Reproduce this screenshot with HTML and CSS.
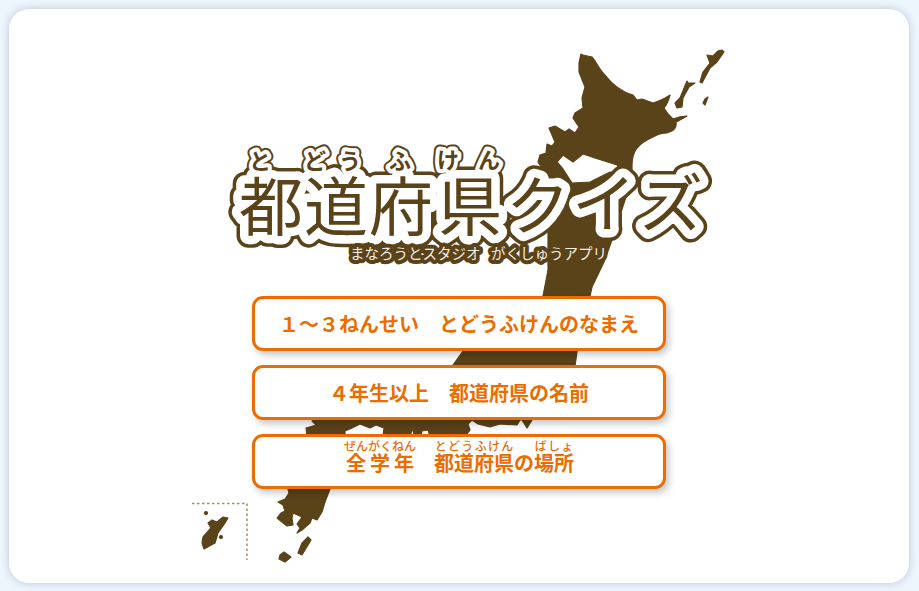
FILE: index.html
```html
<!DOCTYPE html>
<html lang="ja">
<head>
  <meta charset="UTF-8">
  <meta name="viewport" content="width=device-width, initial-scale=1.0">
  <title>都道府県クイズ</title>
  <link rel="stylesheet" href="styles.css">
</head>
<body>
  <div class="card">
    <!-- map art sits behind everything, coords are page px -->
    <svg class="map" viewBox="9 9 900 574" aria-hidden="true">
      <path class="land" fill-rule="evenodd" d="M581 54L583 55L592 57C597 63 600 71 605 75C612 84 622 92 633 95L637 100L642 99L653 103Q663 100 670 95Q668 103 664 108L668 114L673 119Q680 116 687 116Q680 120 676 122Q677 128 672 131L667 133Q660 133 653 137Q642 142 637 148Q632 155 632 165L632 175L625 200L612 240L604 262L592 287L590 296L577 352L575 366L540 415L532 418L532 420L527 428L522 420L520 420L517 425L500 424L490 427L478 424L472 420L468 424L470 430L465 436L430 436L428 430L422 431L421 436L414 436L413 428L410 436L383 436L384 428L376 425L370 428L360 424L352 428L345 431L345 436L307 436L306 428L316 425L312 421L320 418L453 365L463 351L543 296L548 270L548 232L543 170L538 162L540 155L546 153L547 144L552 146L555 142L549 128L555 126L565 132L569 129L575 133L579 127L573 118L575 113L583 108L582 98L585 87L579 72L579 63ZM563 155L557 162L563 169L572 183L590 182L610 172L628 175L617 165L595 158L583 154L573 162Z"/>
      <path class="land" d="M722 50L724 52L717 62L710 68L702 83L700 82L703 72L710 63L707 55L713 56L718 51Z"/>
      <path class="land" d="M687 81L688 83L695 83L689 87L683 98L682 107L677 108L675 103L680 98Z"/>
      <path class="land" d="M708 97L705 105L703 103L705 99Z"/>
      <path class="land" d="M288 489L330 489L325 502L322 512L317 520L312 518L310 523L302 530L297 533L300 528L297 524L302 517L293 513L292 518L293 525L287 526L277 518L281 513L285 511L283 505L278 502L285 499L289 493Z"/>
      <path class="land" d="M308 537L311 540L302 555L298 553L302 543Z"/>
      <path class="land" d="M284 552L291 557L285 562L279 559L280 555Z"/>
      <path class="land" d="M228 518L223 517L217 522L212 520L208 523L211 528L203 537L202 543L204 549L215 543L218 533L225 523Z"/>
      <circle class="land" cx="206" cy="513" r="1.5"/>
      <circle class="land" cx="221" cy="537" r="1.5"/>
      <path class="map-inset" d="M192 503.5H247V560"/>
    </svg>

    <svg class="logo" viewBox="208 130 502 150" role="img" aria-label="都道府県クイズ">
      <defs>
        <text id="logo-title" class="title" x="239 304 369 438 506 572 639" y="230 230 230 230 229 227 227">都道府県クイズ</text>
        <text id="logo-kana" class="kana" x="249 304 339 389 437 478" y="169 169 169 169 168 168">とどうふけん</text>
      </defs>
      <g class="edge">
        <use href="#logo-kana" class="edge-kana"/>
        <use href="#logo-title" class="edge-title"/>
      </g>
      <g class="halo">
        <use href="#logo-kana" class="halo-kana"/>
        <use href="#logo-title" class="halo-title"/>
      </g>
      <g class="ink">
        <use href="#logo-kana"/>
        <use href="#logo-title"/>
      </g>
      <text class="sub" x="350" y="259">まなろうとスタジオ</text>
      <text class="sub" x="491" y="259">がくしゅうアプリ</text>
    </svg>

    <div class="menu">
      <a class="menu-btn">１～３ねんせい　とどうふけんのなまえ</a>
      <a class="menu-btn">４年生以上　都道府県の名前</a>
      <a class="menu-btn menu-btn-ruby"><ruby>全学年<rt>ぜんがくねん</rt></ruby>　<ruby>都道府県<rt>とどうふけん</rt></ruby>の<ruby>場所<rt>ばしょ</rt></ruby></a>
    </div>
  </div>
</body>
</html>
```

FILE: styles.css
```css
html, body {
  height: 100%;
}
body {
  margin: 0;
  padding: 9px 10px 8px 9px;
  box-sizing: border-box;
  background-color: #eef6fd;
  font-family: "Noto Sans CJK JP", "Noto Sans", sans-serif;
}
.card {
  position: relative;
  height: 574px;
  background-color: white;
  border-radius: 20px;
  box-shadow: 0 0 8px rgba(110, 140, 170, 0.45);
  display: flex;
  flex-direction: column;
  align-items: center;
}
.map {
  position: absolute;
  left: 0;
  top: 0;
  width: 900px;
  height: 574px;
}
.land {
  fill: #5a4219;
  stroke: #5a4219;
  stroke-width: 1.2px;
  stroke-linejoin: round;
}
.map-inset {
  fill: none;
  stroke: #a08e70;
  stroke-width: 1.5;
  stroke-dasharray: 2.5 2.5;
}
.logo {
  position: relative;
  width: 502px;
  height: 150px;
  margin-top: 121px;
  overflow: visible;
}
.title {
  font-size: 64px;
  font-weight: 400;
}
.kana {
  font-size: 22px;
  font-weight: 700;
}
.edge, .halo {
  stroke-linejoin: round;
  stroke-linecap: round;
}
.edge {
  fill: #5a4219;
  stroke: #5a4219;
}
.halo {
  fill: white;
  stroke: white;
}
.edge-title {
  stroke-width: 24px;
}
.halo-title {
  stroke-width: 17px;
}
.edge-kana {
  stroke-width: 12px;
}
.halo-kana {
  stroke-width: 8px;
}
.ink {
  fill: #5a4219;
}
.sub {
  font-size: 14.5px;
  fill: #f4efe6;
  stroke: #5a4219;
  stroke-width: 8px;
  stroke-linejoin: round;
  paint-order: stroke;
}
.menu {
  position: relative;
  display: flex;
  flex-direction: column;
  gap: 14px;
  margin-top: 16px;
}
.menu-btn {
  width: 414px;
  height: 55px;
  box-sizing: border-box;
  border: 3px solid #ec6c00;
  border-radius: 11px;
  background-color: white;
  box-shadow: 3px 4px 7px rgba(0, 0, 0, 0.22);
  color: #ec6c00;
  font-size: 20px;
  font-weight: 700;
  line-height: 28px;
  display: flex;
  align-items: center;
  justify-content: center;
}
.menu-btn-ruby {
  display: block;
  text-align: center;
  padding-top: 12px;
}
rt {
  font-size: 12px;
  font-weight: 500;
  line-height: 12px;
}
```
